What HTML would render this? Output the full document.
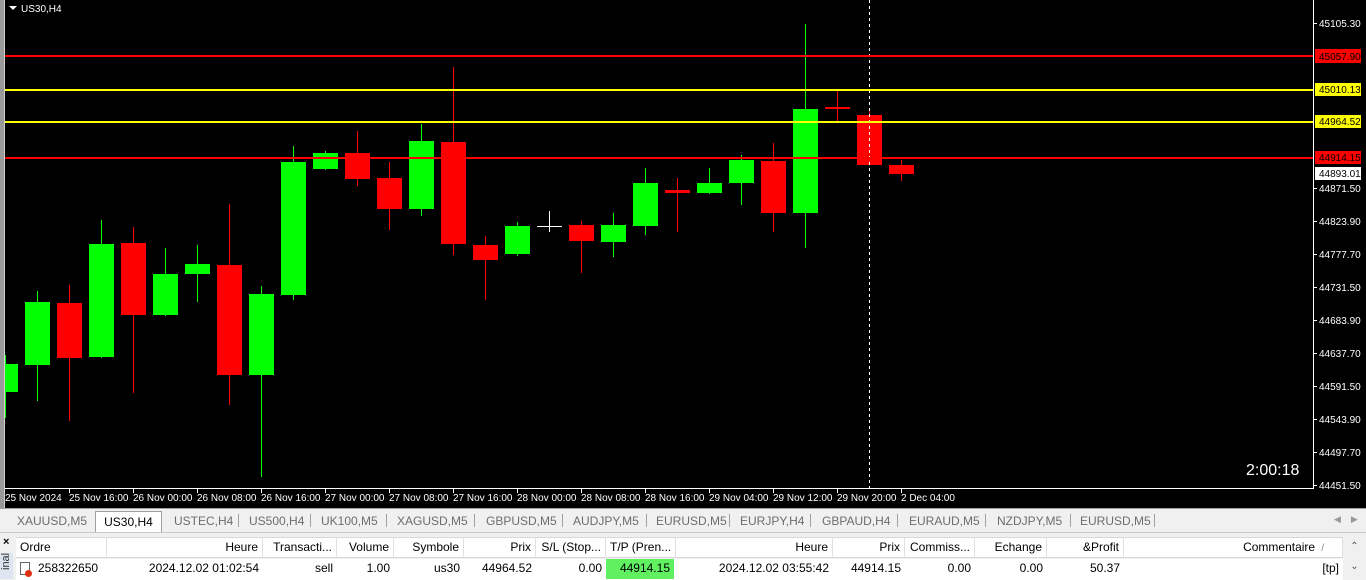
<!DOCTYPE html>
<html><head><meta charset="utf-8"><style>
*{margin:0;padding:0;box-sizing:border-box}
body{width:1366px;height:578px;overflow:hidden;background:#f0f0f0;font-family:"Liberation Sans",sans-serif;position:relative}
svg text{font-family:"Liberation Sans",sans-serif}
.tabs{position:absolute;left:0;top:508px;width:1366px;height:24px;background:#f0f0f0;border-top:1px solid #a0a0a0;font-size:12px;color:#6d6d6d}
.tab{position:absolute;top:5px}
.sep{position:absolute;top:5px;width:1px;height:13px;background:#a0a0a0}
.act{position:absolute;left:95px;top:2px;width:67px;height:22px;background:#fff;border:1px solid #a0a0a0;border-bottom:none;color:#000;font-size:12px;text-align:center;padding-top:3px}
.tbl{position:absolute;left:0;top:532px;width:1366px;height:46px;background:#f0f0f0;border-top:1px solid #c8c8c8}
.side{position:absolute;left:0;top:0;width:14px;height:46px;background:#f0f0f0}
.hd,.rw{position:absolute;left:16px;width:1327px;height:21px;background:#fff;font-size:12px;color:#000}
.hd{top:4px;border-top:1px solid #d8d8d8;border-bottom:1px solid #d8d8d8}
.rw{top:26px}
.c{position:absolute;top:0;height:20px;line-height:19px;padding:0 4px;white-space:nowrap;overflow:hidden;text-align:right}
.hd .c{border-right:1px solid #e0e0e0}
</style></head><body>
<svg width="1366" height="508" style="position:absolute;left:0;top:0">
<rect x="0" y="0" width="1366" height="508" fill="#000"/>
<rect x="0" y="0" width="4" height="508" fill="#9a9a9a"/>
<rect x="4" y="0" width="1" height="508" fill="#d0d0d0"/>
<line x1="5" y1="488.5" x2="1313" y2="488.5" stroke="#fff"/>
<line x1="1313.5" y1="0" x2="1313.5" y2="489" stroke="#fff"/>
<polygon points="9,6 17,6 13,10" fill="#fff"/>
<text x="21" y="12" fill="#fff" font-size="10">US30,H4</text>
<g stroke="#ff0000" stroke-width="1">
<line x1="69.5" y1="285" x2="69.5" y2="421"/><line x1="133.5" y1="227" x2="133.5" y2="393"/><line x1="229.5" y1="204" x2="229.5" y2="405"/><line x1="357.5" y1="131" x2="357.5" y2="186"/><line x1="389.5" y1="162" x2="389.5" y2="230"/><line x1="453.5" y1="67" x2="453.5" y2="255"/><line x1="485.5" y1="236" x2="485.5" y2="300"/><line x1="581.5" y1="221" x2="581.5" y2="273"/><line x1="677.5" y1="178" x2="677.5" y2="232"/><line x1="773.5" y1="143" x2="773.5" y2="232"/><line x1="837.5" y1="90" x2="837.5" y2="121"/><line x1="869.5" y1="108" x2="869.5" y2="115"/><line x1="901.5" y1="160" x2="901.5" y2="181"/>
</g>
<g stroke="#00ff00" stroke-width="1">
<line x1="5.5" y1="355" x2="5.5" y2="418"/><line x1="37.5" y1="291" x2="37.5" y2="401"/><line x1="101.5" y1="220" x2="101.5" y2="358"/><line x1="165.5" y1="248" x2="165.5" y2="316"/><line x1="197.5" y1="245" x2="197.5" y2="302"/><line x1="261.5" y1="286" x2="261.5" y2="477"/><line x1="293.5" y1="146" x2="293.5" y2="300"/><line x1="325.5" y1="151" x2="325.5" y2="170"/><line x1="421.5" y1="124" x2="421.5" y2="216"/><line x1="517.5" y1="222" x2="517.5" y2="256"/><line x1="613.5" y1="213" x2="613.5" y2="257"/><line x1="645.5" y1="168" x2="645.5" y2="235"/><line x1="709.5" y1="168" x2="709.5" y2="194"/><line x1="741.5" y1="155" x2="741.5" y2="205"/><line x1="805.5" y1="24" x2="805.5" y2="248"/>
</g>
<line x1="549.5" y1="211" x2="549.5" y2="232" stroke="#fff"/><line x1="537" y1="226.5" x2="562" y2="226.5" stroke="#fff"/>
<g fill="#00ff00">
<rect x="5" y="364" width="13" height="28"/><rect x="25" y="302" width="25" height="63"/><rect x="89" y="244" width="25" height="113"/><rect x="153" y="274" width="25" height="41"/><rect x="185" y="264" width="25" height="10"/><rect x="249" y="294" width="25" height="81"/><rect x="281" y="162" width="25" height="133"/><rect x="313" y="153" width="25" height="16"/><rect x="409" y="141" width="25" height="68"/><rect x="505" y="226" width="25" height="28"/><rect x="601" y="225" width="25" height="17"/><rect x="633" y="183" width="25" height="43"/><rect x="697" y="183" width="25" height="10"/><rect x="729" y="160" width="25" height="23"/><rect x="793" y="109" width="25" height="104"/>
</g>
<g fill="#ff0000">
<rect x="57" y="303" width="25" height="55"/><rect x="121" y="243" width="25" height="72"/><rect x="217" y="265" width="25" height="110"/><rect x="345" y="153" width="25" height="26"/><rect x="377" y="178" width="25" height="31"/><rect x="441" y="142" width="25" height="102"/><rect x="473" y="245" width="25" height="15"/><rect x="569" y="225" width="25" height="16"/><rect x="665" y="190" width="25" height="3"/><rect x="761" y="161" width="25" height="52"/><rect x="825" y="107" width="25" height="2"/><rect x="857" y="115" width="25" height="50"/><rect x="889" y="165" width="25" height="9"/>
</g>
<line x1="869.5" y1="0" x2="869.5" y2="488" stroke="#fff" stroke-dasharray="3,3"/>
<rect x="5" y="55" width="1308" height="2" fill="#ff0000"/>
<rect x="5" y="89" width="1308" height="2" fill="#ffff00"/>
<rect x="5" y="121" width="1308" height="2" fill="#ffff00"/>
<rect x="5" y="157" width="1308" height="2" fill="#ff0000"/>
<g stroke="#fff"><line x1="1314" y1="23.5" x2="1317" y2="23.5"/><line x1="1314" y1="188.5" x2="1317" y2="188.5"/><line x1="1314" y1="221.5" x2="1317" y2="221.5"/><line x1="1314" y1="254.5" x2="1317" y2="254.5"/><line x1="1314" y1="287.5" x2="1317" y2="287.5"/><line x1="1314" y1="320.5" x2="1317" y2="320.5"/><line x1="1314" y1="353.5" x2="1317" y2="353.5"/><line x1="1314" y1="386.5" x2="1317" y2="386.5"/><line x1="1314" y1="419.5" x2="1317" y2="419.5"/><line x1="1314" y1="452.5" x2="1317" y2="452.5"/><line x1="1314" y1="485.5" x2="1317" y2="485.5"/></g>
<rect x="1315" y="49" width="46" height="14" fill="#ff0000"/>
<rect x="1315" y="83" width="46" height="13" fill="#ffff00"/>
<rect x="1315" y="115" width="46" height="13" fill="#ffff00"/>
<rect x="1315" y="151" width="46" height="13" fill="#ff0000"/>
<rect x="1315" y="167" width="46" height="13" fill="#fff"/>
<g font-size="10" fill="#fff">
<text x="1319" y="27">45105.30</text>
<text x="1319" y="60" fill="#000">45057.90</text>
<text x="1319" y="93" fill="#000">45010.13</text>
<text x="1319" y="125" fill="#000">44964.52</text>
<text x="1319" y="161" fill="#000">44914.15</text>
<text x="1319" y="177" fill="#000">44893.01</text>
<text x="1319" y="192">44871.50</text>
<text x="1319" y="225">44823.90</text>
<text x="1319" y="258">44777.70</text>
<text x="1319" y="291">44731.50</text>
<text x="1319" y="324">44683.90</text>
<text x="1319" y="357">44637.70</text>
<text x="1319" y="390">44591.50</text>
<text x="1319" y="423">44543.90</text>
<text x="1319" y="456">44497.70</text>
<text x="1319" y="489">44451.50</text>
</g>
<g stroke="#fff"><line x1="69.5" y1="489" x2="69.5" y2="493"/><line x1="133.5" y1="489" x2="133.5" y2="493"/><line x1="197.5" y1="489" x2="197.5" y2="493"/><line x1="261.5" y1="489" x2="261.5" y2="493"/><line x1="325.5" y1="489" x2="325.5" y2="493"/><line x1="389.5" y1="489" x2="389.5" y2="493"/><line x1="453.5" y1="489" x2="453.5" y2="493"/><line x1="517.5" y1="489" x2="517.5" y2="493"/><line x1="581.5" y1="489" x2="581.5" y2="493"/><line x1="645.5" y1="489" x2="645.5" y2="493"/><line x1="709.5" y1="489" x2="709.5" y2="493"/><line x1="773.5" y1="489" x2="773.5" y2="493"/><line x1="837.5" y1="489" x2="837.5" y2="493"/><line x1="901.5" y1="489" x2="901.5" y2="493"/></g>
<g font-size="10" fill="#fff">
<text x="5" y="501">25 Nov 2024</text><text x="69" y="501">25 Nov 16:00</text><text x="133" y="501">26 Nov 00:00</text><text x="197" y="501">26 Nov 08:00</text><text x="261" y="501">26 Nov 16:00</text><text x="325" y="501">27 Nov 00:00</text><text x="389" y="501">27 Nov 08:00</text><text x="453" y="501">27 Nov 16:00</text><text x="517" y="501">28 Nov 00:00</text><text x="581" y="501">28 Nov 08:00</text><text x="645" y="501">28 Nov 16:00</text><text x="709" y="501">29 Nov 04:00</text><text x="773" y="501">29 Nov 12:00</text><text x="837" y="501">29 Nov 20:00</text><text x="901" y="501">2 Dec 04:00</text>
</g>
<text x="1246" y="475" fill="#fff" font-size="16">2:00:18</text>
</svg>
<div class="tabs">
<span class="tab" style="left:17px">XAUUSD,M5</span>
<div class="act">US30,H4</div>
<span class="tab" style="left:174px">USTEC,H4</span><div class="sep" style="left:238px"></div>
<span class="tab" style="left:249px">US500,H4</span><div class="sep" style="left:310px"></div>
<span class="tab" style="left:321px">UK100,M5</span><div class="sep" style="left:386px"></div>
<span class="tab" style="left:397px">XAGUSD,M5</span><div class="sep" style="left:474px"></div>
<span class="tab" style="left:486px">GBPUSD,M5</span><div class="sep" style="left:562px"></div>
<span class="tab" style="left:573px">AUDJPY,M5</span><div class="sep" style="left:646px"></div>
<span class="tab" style="left:656px">EURUSD,M5</span><div class="sep" style="left:729px"></div>
<span class="tab" style="left:740px">EURJPY,H4</span><div class="sep" style="left:810px"></div>
<span class="tab" style="left:822px">GBPAUD,H4</span><div class="sep" style="left:897px"></div>
<span class="tab" style="left:909px">EURAUD,M5</span><div class="sep" style="left:985px"></div>
<span class="tab" style="left:997px">NZDJPY,M5</span><div class="sep" style="left:1070px"></div>
<span class="tab" style="left:1080px">EURUSD,M5</span><div class="sep" style="left:1154px"></div>
<span class="tab" style="left:1334px;font-size:9px;color:#999">◀&nbsp;&nbsp;&nbsp;&nbsp;▶</span>
</div>
<div class="tbl">
<div class="side"><div style="position:absolute;left:3px;top:3px;font-size:11px;font-weight:bold">×</div>
<div style="position:absolute;left:0;top:20px;width:13px;height:26px;background:#dde6f0;font-size:11px;color:#333;writing-mode:vertical-rl;transform:rotate(180deg);text-align:right">inal</div></div>
<div class="hd">
<div class="c" style="left:0;width:91px;text-align:left">Ordre</div>
<div class="c" style="left:91px;width:156px">Heure</div>
<div class="c" style="left:247px;width:74px">Transacti...</div>
<div class="c" style="left:321px;width:57px">Volume</div>
<div class="c" style="left:378px;width:70px">Symbole</div>
<div class="c" style="left:448px;width:72px">Prix</div>
<div class="c" style="left:520px;width:70px">S/L (Stop...</div>
<div class="c" style="left:590px;width:70px">T/P (Pren...</div>
<div class="c" style="left:660px;width:157px">Heure</div>
<div class="c" style="left:817px;width:72px">Prix</div>
<div class="c" style="left:889px;width:70px">Commiss...</div>
<div class="c" style="left:959px;width:72px">Echange</div>
<div class="c" style="left:1031px;width:77px">&amp;Profit</div>
<div class="c" style="left:1108px;width:219px;padding-right:18px">Commentaire <span style="color:#888;font-size:10px">&nbsp;/</span></div>
</div>
<div class="rw">
<div class="c" style="left:0;width:91px;text-align:left;padding-left:22px">258322650</div>
<div style="position:absolute;left:4px;top:3px;width:10px;height:13px;border:1px solid #666;background:#fff"></div>
<div style="position:absolute;left:9px;top:11px;width:7px;height:7px;border-radius:50%;background:#e03010"></div>
<div class="c" style="left:91px;width:156px">2024.12.02 01:02:54</div>
<div class="c" style="left:247px;width:74px">sell</div>
<div class="c" style="left:321px;width:57px">1.00</div>
<div class="c" style="left:378px;width:70px">us30</div>
<div class="c" style="left:448px;width:72px">44964.52</div>
<div class="c" style="left:520px;width:70px">0.00</div>
<div class="c" style="left:590px;width:68px;background:#60f060">44914.15</div>
<div class="c" style="left:660px;width:157px">2024.12.02 03:55:42</div>
<div class="c" style="left:817px;width:72px">44914.15</div>
<div class="c" style="left:889px;width:70px">0.00</div>
<div class="c" style="left:959px;width:72px">0.00</div>
<div class="c" style="left:1031px;width:77px">50.37</div>
<div class="c" style="left:1108px;width:219px">[tp]</div>
</div>
<div style="position:absolute;left:1343px;top:4px;width:23px;height:42px;background:#f0f0f0;font-size:10px;color:#555;text-align:center;line-height:20px">⌃<br>⌄</div>
</div>
</body></html>
